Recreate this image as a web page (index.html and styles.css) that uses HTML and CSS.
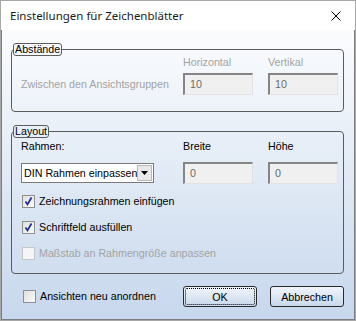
FILE: index.html
```html
<!DOCTYPE html>
<html>
<head>
  <meta charset="UTF-8" />
  <title>Einstellungen für Zeichenblätter</title>
  <link rel="stylesheet" href="styles.css">
</head>
<body>
  <div class="dialog">
    <div class="titlebar">
      <span class="title">Einstellungen für Zeichenblätter</span>
      <svg class="close" width="10" height="10" viewBox="0 0 10 10">
        <path d="M0.5 0.5 L9.5 9.5 M9.5 0.5 L0.5 9.5" stroke="#000" stroke-width="1" fill="none" />
      </svg>
    </div>

    <div class="content">
      <fieldset class="group">
        <legend>Abstände</legend>
        <div class="group-body">
          <div class="grid grid-spacing">
            <span></span>
            <span class="disabled">Horizontal</span>
            <span class="disabled">Vertikal</span>
            <span class="disabled">Zwischen den Ansichtsgruppen</span>
            <div class="field">10</div>
            <div class="field">10</div>
          </div>
        </div>
      </fieldset>

      <fieldset class="group group-layout">
        <legend>Layout</legend>
        <div class="group-body layout-body">
          <div class="grid grid-layout">
            <span>Rahmen:</span>
            <span>Breite</span>
            <span>Höhe</span>
            <div class="combo">
              <span class="combo-text">DIN Rahmen einpassen</span>
              <span class="combo-btn">
                <svg width="7" height="4" viewBox="0 0 7 4"><path d="M0 0 H7 L3.5 4 Z" fill="#000" /></svg>
              </span>
            </div>
            <div class="field">0</div>
            <div class="field">0</div>
          </div>

          <div class="checks">
            <label class="check">
              <span class="box">
                <svg width="11" height="11" viewBox="0 0 11 11"><path d="M2.5 5.5 L4.5 8.5 L8.5 1.5" stroke="#1b2a8f" stroke-width="1.7" fill="none" /></svg>
              </span>
              Zeichnungsrahmen einfügen
            </label>
            <label class="check">
              <span class="box">
                <svg width="11" height="11" viewBox="0 0 11 11"><path d="M2.5 5.5 L4.5 8.5 L8.5 1.5" stroke="#1b2a8f" stroke-width="1.7" fill="none" /></svg>
              </span>
              Schriftfeld ausfüllen
            </label>
            <label class="check disabled">
              <span class="box"></span>
              Maßstab an Rahmengröße anpassen
            </label>
          </div>
        </div>
      </fieldset>

      <div class="footer">
        <label class="check">
          <span class="box"></span>
          Ansichten neu anordnen
        </label>
        <div class="buttons">
          <button class="btn btn-default">OK</button>
          <button class="btn">Abbrechen</button>
        </div>
      </div>
    </div>
  </div>
</body>
</html>
```

FILE: styles.css
```css
:root {
  --text: #000000;
  --text-disabled: #a3a3a3;
  --frame: #5c5c5c;
  --field-bg: #f0f0f0;
}

* {
  margin: 0;
  padding: 0;
  box-sizing: border-box;
}

body {
  font-family: "Liberation Sans", Arial, sans-serif;
  font-size: 10.7px;
  line-height: 13px;
  color: var(--text);
  background: #ffffff;
  white-space: nowrap;
}

.dialog {
  width: 356px;
  height: 321px;
  border: 1px solid #a7a7a7;
  display: flex;
  flex-direction: column;
}

.titlebar {
  height: 29px;
  flex-shrink: 0;
  background: #ffffff;
  display: flex;
  align-items: center;
  padding: 0 10px 0 9px;
}

.title {
  font-family: "Noto Sans", "Liberation Sans", sans-serif;
  font-size: 11.5px;
  color: #1a1a1a;
  flex-grow: 1;
}

.close {
  margin-right: 4px;
}

.content {
  flex-grow: 1;
  display: flex;
  flex-direction: column;
  padding: 13px 10px 0 9px;
  border: 1px solid #7e7e7e;
  border-top: none;
  background: linear-gradient(to bottom, #fbfcfe 0%, #e4ecf6 45%, #c7d7ed 100%);
}

.group {
  border: 1px solid var(--frame);
  border-radius: 4px;
  min-width: 0;
}

.group legend {
  margin-left: 1px;
  padding: 0 1px;
  border: 1px solid var(--frame);
  border-radius: 3px;
  line-height: 11px;
}

.group-layout {
  margin-top: 13px;
}

.group-body {
  padding: 0 5px 16px 9px;
}

.layout-body {
  padding-top: 2px;
  padding-bottom: 7px;
}

.grid {
  display: grid;
  grid-template-columns: 147px 70px 70px;
  column-gap: 15px;
  align-items: center;
}

.grid-spacing {
  grid-template-rows: 13px 22px;
  row-gap: 4px;
}

.grid-layout {
  grid-template-rows: 13px 22px;
  row-gap: 9px;
}

.disabled {
  color: var(--text-disabled);
}

.field {
  height: 22px;
  background: var(--field-bg);
  border-style: solid;
  border-width: 2px 1px 1px 2px;
  border-color: #858585 #e2e2e2 #e2e2e2 #858585;
  padding-left: 5px;
  line-height: 19px;
  color: #6a6a6a;
}

.combo {
  width: 133px;
  height: 20px;
  background: #ffffff;
  border: 1px solid #7a7a7a;
  display: flex;
  align-items: center;
  padding: 0 1px 0 2px;
}

.combo-text {
  flex-grow: 1;
}

.combo-btn {
  width: 15px;
  height: 16px;
  background: #e9e9e9;
  border: 1px solid #b9b9b9;
  display: flex;
  align-items: center;
  justify-content: center;
}

.checks {
  margin-top: 4px;
}

.check {
  height: 26px;
  display: flex;
  align-items: center;
  gap: 4px;
  padding-left: 1px;
}

.box {
  width: 13px;
  height: 13px;
  border: 1px solid #8e8f8f;
  background: linear-gradient(135deg, #dedede, #fbfbfb);
  display: flex;
  align-items: center;
  justify-content: center;
}

.check.disabled .box {
  border-color: #c6c6c6;
  background: #f3f5f8;
}

.footer {
  margin-top: 12px;
  height: 21px;
  display: flex;
  align-items: center;
  padding-left: 12px;
}

.footer .check {
  padding-left: 0;
}

.buttons {
  margin-left: auto;
  display: flex;
  gap: 13px;
}

.btn {
  position: relative;
  width: 74px;
  height: 21px;
  border: 1px solid #2a2a2a;
  border-radius: 3px;
  background: linear-gradient(to bottom, #f1f5fb 0%, #dde7f3 50%, #c9d8ec 100%);
  font-family: "Liberation Sans", Arial, sans-serif;
  font-size: 10.7px;
  color: var(--text);
}

.btn-default::after {
  content: "";
  position: absolute;
  inset: 1px;
  border: 1px dotted #000000;
  border-radius: 2px;
}
```
